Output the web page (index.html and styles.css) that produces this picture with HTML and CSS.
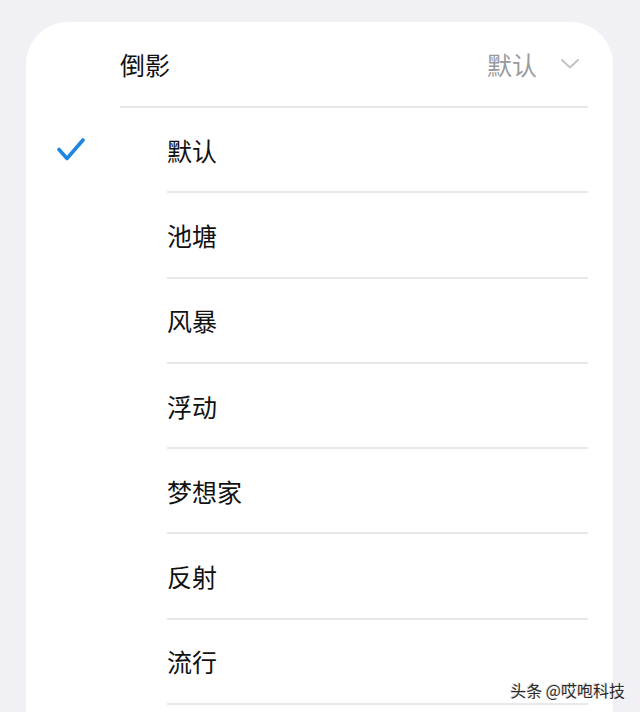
FILE: index.html
```html
<!DOCTYPE html>
<html lang="zh">
<head>
<meta charset="utf-8">
<link rel="stylesheet" href="styles.css">
</head>
<body>
<div class="card">
  <div class="header">
    <span class="title">倒影</span>
    <span class="value">默认</span>
    <svg class="chevron" width="18" height="10" viewBox="0 0 18 10"><polyline points="1,1 9,8.5 17,1" fill="none" stroke="#c4c4c8" stroke-width="2" stroke-linecap="round" stroke-linejoin="round"/></svg>
  </div>
  <ul class="list">
    <li class="item"><span class="check"><svg width="28" height="24" viewBox="0 0 28 24"><polyline points="2,11.5 10,20.5 26,2" fill="none" stroke="#1e86e0" stroke-width="3.6" stroke-linecap="round" stroke-linejoin="round"/></svg></span><span class="label">默认</span></li>
    <li class="item"><span class="check"></span><span class="label">池塘</span></li>
    <li class="item"><span class="check"></span><span class="label">风暴</span></li>
    <li class="item"><span class="check"></span><span class="label">浮动</span></li>
    <li class="item"><span class="check"></span><span class="label">梦想家</span></li>
    <li class="item"><span class="check"></span><span class="label">反射</span></li>
    <li class="item"><span class="check"></span><span class="label">流行</span></li>
  </ul>
  <div class="watermark">头条 @哎咆科技</div>
</div>
</body>
</html>
```
FILE: styles.css
```css
* { box-sizing: border-box; }
html, body { margin: 0; padding: 0; }
body {
  background: #f1f1f5;
  width: 640px;
  height: 712px;
  overflow: hidden;
  font-family: "Noto Sans CJK SC", "Noto Sans", sans-serif;
  padding-top: 22px;
}
.card {
  position: relative;
  margin: 0 27px 0 26px;
  background: #fff;
  border-radius: 42px 42px 0 0;
  height: 700px;
}
.header {
  display: flex;
  align-items: center;
  height: 86px;
  margin: 0 25px 0 94px;
  border-bottom: 2px solid #e8e8eb;
}
.title {
  font-size: 25px;
  color: #111;
  flex: 1;
}
.value {
  font-size: 25px;
  color: #9a9a9e;
  margin-right: 24px;
}
.chevron { margin-right: 9px; }
.list {
  list-style: none;
  margin: 0;
  padding: 0;
}
.item {
  display: flex;
  height: 85.3px;
}
.check {
  width: 141px;
  display: flex;
  align-items: center;
  padding-left: 31px;
  padding-bottom: 2px;
}
.label {
  flex: 1;
  display: flex;
  align-items: center;
  margin-right: 25px;
  border-bottom: 2px solid #e8e8eb;
  font-size: 25px;
  color: #111;
}
.watermark {
  position: absolute;
  right: -12px;
  top: 656px;
  font-size: 16px;
  color: #2a2a2a;
  text-shadow: 1px 1px 0 #fff, -1px -1px 0 #ddd;
}
```
